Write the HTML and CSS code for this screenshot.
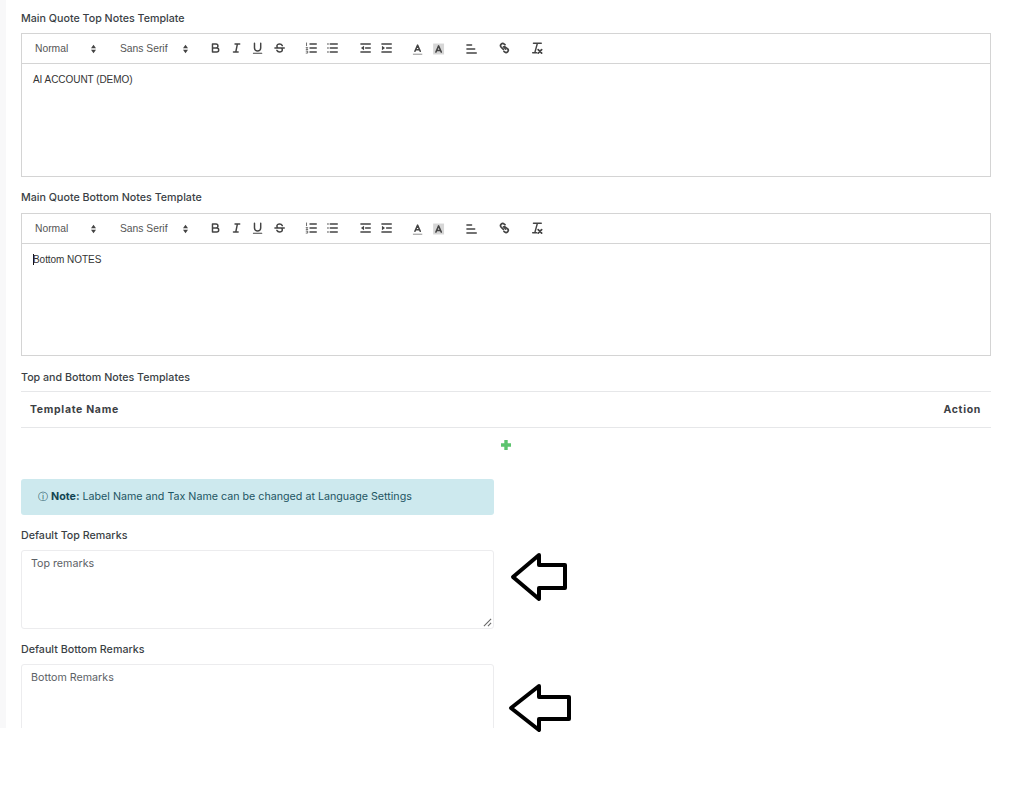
FILE: index.html
```html
<!DOCTYPE html>
<html lang="en">
<head>
<meta charset="utf-8">
<title>Quote settings</title>
<link rel="stylesheet" href="styles.css">
</head>
<body>
<svg class="defs" width="0" height="0" aria-hidden="true">
  <defs>
    <symbol id="i-updown" viewBox="0 0 8 12"><path d="M4 1 7 5H1ZM4 11 1 7H7Z"/></symbol>
    <symbol id="i-bold" viewBox="0 0 18 18"><path class="s" d="M5 4H9.500A2.500 2.500 0 0 1 9.500 9H5ZM5 9H10.500A2.500 2.500 0 0 1 10.500 14H5Z"/></symbol>
    <symbol id="i-italic" viewBox="0 0 18 18"><path class="s" d="M7 4H13M5 14H11M8 14 10 4"/></symbol>
    <symbol id="i-underline" viewBox="0 0 18 18"><path class="s" d="M5 3V9A4 4 0 0 0 13 9V3"/><rect class="f" x="3" y="15" width="12" height="1.500" rx=".5"/></symbol>
    <symbol id="i-strike" viewBox="0 0 18 18"><path class="s" d="M12.500 6C11.800 4.600 10.500 4 9 4 7 4 5.500 5 5.500 6.500 5.500 7.500 6 8.300 7 9M5.500 12C6.200 13.400 7.500 14 9 14 11 14 12.500 13 12.500 11.500 12.500 10.800 12.300 10 11.800 9.500M3 9H15"/></symbol>
    <symbol id="i-ol" viewBox="0 0 18 18"><path class="s" d="M7 4H15M7 9H15M7 14H15"/><path class="s thin" d="M2.500 2.500V6M2 8.500H4L2 11H4M2 13H4V15.500H2"/></symbol>
    <symbol id="i-ul" viewBox="0 0 18 18"><path class="s" d="M6 4H15M6 9H15M6 14H15M3 4H3.100M3 9H3.100M3 14H3.100"/></symbol>
    <symbol id="i-outdent" viewBox="0 0 18 18"><path class="s" d="M3 4H15M3 14H15M9 9H15"/><path class="f" d="M3 9 7 6V12Z"/></symbol>
    <symbol id="i-indent" viewBox="0 0 18 18"><path class="s" d="M3 4H15M3 14H15M9 9H15"/><path class="f" d="M7 9 3 6V12Z"/></symbol>
    <symbol id="i-color" viewBox="0 0 18 18"><path class="s" d="M5.500 12 9 4 12.500 12M6.500 10H11.500"/><rect class="f" x="3" y="15" width="12" height="1.500" opacity=".5"/></symbol>
    <symbol id="i-bg" viewBox="0 0 18 18"><rect class="f" x="2" y="2" width="14" height="14" opacity=".22"/><path class="s" d="M5.500 13 9 5 12.500 13M6.500 11H11.500"/></symbol>
    <symbol id="i-align" viewBox="0 0 18 18"><path class="s" d="M3 9H13M3 14H15M3 4H9"/></symbol>
    <symbol id="i-link" viewBox="0 0 18 18"><path class="s" d="M7.500 7.500 10.500 10.500"/><path class="s bold" d="M9.500 4.800 8.500 3.900A2.800 2.800 0 0 0 4.500 7.800L7.500 10.700M9 7.200 13 10.100A2.800 2.800 0 0 1 9 14L8.200 13.300"/></symbol>
    <symbol id="i-clean" viewBox="0 0 18 18"><path class="s" d="M5 3H15M10 3 7 14M4 15H9"/><path class="s bold" d="M11 11 15.500 15.500M15.500 11 11 15.500"/></symbol>
  </defs>
</svg>

<div class="page">
  <main class="content">
    <section class="field">
      <label class="label">Main Quote Top Notes Template</label>
      <div class="editor">
        <div class="toolbar">
          <span class="picker"><span>Normal</span><svg class="updown"><use href="#i-updown"/></svg></span>
          <span class="picker picker-font"><span>Sans Serif</span><svg class="updown"><use href="#i-updown"/></svg></span>
          <span class="group"><svg class="ico"><use href="#i-bold"/></svg><svg class="ico"><use href="#i-italic"/></svg><svg class="ico"><use href="#i-underline"/></svg><svg class="ico"><use href="#i-strike"/></svg></span>
          <span class="group group-list"><svg class="ico"><use href="#i-ol"/></svg><svg class="ico"><use href="#i-ul"/></svg></span>
          <span class="group group-indent"><svg class="ico"><use href="#i-outdent"/></svg><svg class="ico"><use href="#i-indent"/></svg></span>
          <span class="group"><svg class="ico low"><use href="#i-color"/></svg><svg class="ico low"><use href="#i-bg"/></svg></span>
          <span class="group"><svg class="ico low"><use href="#i-align"/></svg></span>
          <span class="group"><svg class="ico"><use href="#i-link"/></svg></span>
          <span class="group"><svg class="ico"><use href="#i-clean"/></svg></span>
        </div>
        <div class="body">AI ACCOUNT (DEMO)</div>
      </div>
    </section>

    <section class="field">
      <label class="label">Main Quote Bottom Notes Template</label>
      <div class="editor">
        <div class="toolbar">
          <span class="picker"><span>Normal</span><svg class="updown"><use href="#i-updown"/></svg></span>
          <span class="picker picker-font"><span>Sans Serif</span><svg class="updown"><use href="#i-updown"/></svg></span>
          <span class="group"><svg class="ico"><use href="#i-bold"/></svg><svg class="ico"><use href="#i-italic"/></svg><svg class="ico"><use href="#i-underline"/></svg><svg class="ico"><use href="#i-strike"/></svg></span>
          <span class="group group-list"><svg class="ico"><use href="#i-ol"/></svg><svg class="ico"><use href="#i-ul"/></svg></span>
          <span class="group group-indent"><svg class="ico"><use href="#i-outdent"/></svg><svg class="ico"><use href="#i-indent"/></svg></span>
          <span class="group"><svg class="ico low"><use href="#i-color"/></svg><svg class="ico low"><use href="#i-bg"/></svg></span>
          <span class="group"><svg class="ico low"><use href="#i-align"/></svg></span>
          <span class="group"><svg class="ico"><use href="#i-link"/></svg></span>
          <span class="group"><svg class="ico"><use href="#i-clean"/></svg></span>
        </div>
        <div class="body"><span class="caret"></span>Bottom NOTES</div>
      </div>
    </section>

    <section class="templates">
      <label class="label">Top and Bottom Notes Templates</label>
      <div class="thead"><span>Template Name</span><span>Action</span></div>
      <div class="add-row"><svg class="plus" viewBox="0 0 12 12"><path d="M4.300 1H7.700V4.300H11V7.700H7.700V11H4.300V7.700H1V4.300H4.300Z"/></svg></div>
    </section>

    <div class="half">
      <div class="alert"><span class="info">&#9432;</span> <b>Note:</b> Label Name and Tax Name can be changed at Language Settings</div>
      <section class="remark">
        <label class="label">Default Top Remarks</label>
        <div class="textarea">Top remarks
          <svg class="grip" viewBox="0 0 10 10"><path d="M1 9 9 1M5.500 9 9 5.500"/></svg>
        </div>
      </section>
      <section class="remark">
        <label class="label">Default Bottom Remarks</label>
        <div class="textarea textarea-cut">Bottom Remarks</div>
      </section>
    </div>
  </main>

  <svg class="arrow arrow-top" viewBox="0 0 56 50"><path d="M28 3 2 25 28 47V36H54V13H28Z"/></svg>
  <svg class="arrow arrow-bottom" viewBox="0 0 62 48"><path d="M30 2 2 24 30 46V35H60V13H30Z"/></svg>
</div>
```

FILE: styles.css
```css
* { box-sizing: border-box; }

html, body { margin: 0; padding: 0; background: #fff; }

body { font-family: "Inter", "Liberation Sans", sans-serif; color: #343a40; }

.defs { position: absolute; }

.page {
  position: relative;
  height: 798px;
  background: #fff;
}

.content {
  height: 728px;
  overflow: hidden;
  padding: 12px 33px 0 15px;
  border-left: 6px solid #f8f8f9;
}

.label {
  display: block;
  height: 13px;
  font-size: 10.700px;
  line-height: 13px;
  font-weight: 500;
  color: #3a3f45;
}

.field { margin-bottom: 14px; }

.editor { margin-top: 8px; height: 144px; border: 1px solid #d4d4d4; }

.field + .field .editor { margin-top: 9px; height: 143px; }

.toolbar {
  display: flex;
  align-items: center;
  height: 30px;
  padding-left: 6px;
  border-bottom: 1px solid #d4d4d4;
  color: #555;
  font-family: "Liberation Sans", sans-serif;
  font-size: 10.300px;
}

.picker {
  display: flex;
  align-items: center;
  justify-content: space-between;
  width: 69px;
  margin-right: 17px;
  padding: 0 0 0 7px;
}

.picker-font { width: 75px; margin-right: 16px; padding-left: 6px; }

.updown { width: 7px; height: 10px; fill: #444; }

.group { display: flex; margin-right: 11.500px; margin-bottom: 2px; }

.group-list { margin-right: 11px; }

.group-indent { margin-right: 10px; }

.ico { display: block; width: 21.200px; height: 14px; }

.ico.low { margin-top: 2px; }

.s { fill: none; stroke: #444; stroke-width: 1.900; stroke-linecap: round; stroke-linejoin: round; }
.s.thin { stroke-width: 1; }
.s.bold { stroke-width: 2.200; }
.f { fill: #444; stroke: none; }

.body {
  padding: 9px 11px;
  font-family: "Liberation Sans", sans-serif;
  font-size: 10px;
  letter-spacing: -.05px;
  line-height: 13px;
  color: #333;
}

.caret { display: inline-block; width: 1px; height: 11px; margin-right: -1px; background: #111; vertical-align: -2px; }

.templates { margin-top: 15px; }

.thead {
  display: flex;
  justify-content: space-between;
  height: 37px;
  margin-top: 7px;
  padding: 0 10px 0 9px;
  border-top: 1px solid #e6e7e9;
  border-bottom: 1px solid #e6e7e9;
  font-size: 10.500px;
  font-weight: 700;
  line-height: 35px;
  letter-spacing: .68px;
  color: #3c4044;
}

.add-row { display: flex; justify-content: center; height: 51px; padding-top: 11px; }

.plus { display: block; width: 12px; height: 12px; fill: #5cc46e; }

.half { width: 473px; }

.alert {
  height: 36px;
  padding: 0 17px;
  border-radius: 3px;
  background: #cde9ee;
  font-size: 10.700px;
  line-height: 35px;
  color: #1d5563;
  white-space: nowrap;
}

.alert b { font-weight: 700; color: #124452; }
.info { font-family: "DejaVu Sans", sans-serif; font-size: 10px; }

.remark { margin-top: 14px; }

.textarea {
  position: relative;
  height: 79px;
  margin-top: 8px;
  padding: 6px 9px;
  border: 1px solid #ececee;
  border-radius: 3px;
  font-size: 10.700px;
  line-height: 13px;
  color: #5c6166;
}

.textarea-cut { height: 90px; }

.grip {
  position: absolute;
  right: 1px;
  bottom: 1px;
  width: 9px;
  height: 9px;
  fill: none;
  stroke: #666;
  stroke-width: 1.200;
}

.arrow {
  position: absolute;
  z-index: 1;
  overflow: visible;
  fill: #fff;
  stroke: #000;
  stroke-width: 4;
  stroke-linejoin: round;
}

.arrow-top { left: 511px; top: 552px; width: 56px; height: 50px; }
.arrow-bottom { left: 509px; top: 684px; width: 62px; height: 48px; }
```
